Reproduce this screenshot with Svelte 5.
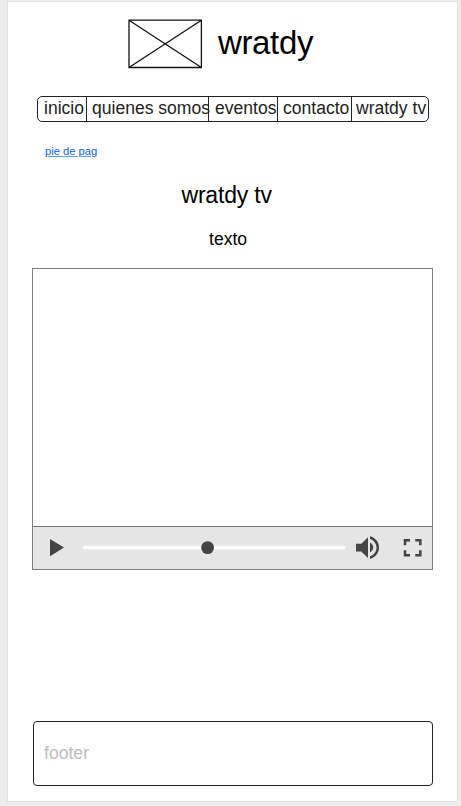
<script>
  const items = [
    { label: 'inicio', width: 49, pad: 6 },
    { label: 'quienes somos', width: 122, pad: 5 },
    { label: 'eventos', width: 69, pad: 6 },
    { label: 'contacto', width: 74, pad: 5 },
    { label: 'wratdy tv', width: 76, pad: 4 }
  ];
</script>

<div class="canvas">
  <main class="page">
    <header>
      <svg class="logo" width="75" height="50" viewBox="0 0 75 50" fill="none" stroke="#111" stroke-width="1.3">
        <path d="M1 1.2H73.4V48.5H1ZM1 1.2L73.4 48.5M73.4 1.2L1 48.5" />
      </svg>
      <h1>wratdy</h1>
    </header>

    <nav>
      {#each items as item}
        <span class="item" style="width: {item.width}px; padding-left: {item.pad}px">{item.label}</span>
      {/each}
    </nav>

    <a class="crumb" href="#footer">pie de pag</a>
    <h2>wratdy tv</h2>
    <p>texto</p>

    <section class="player">
      <div class="screen"></div>
      <div class="controls">
        <svg width="399" height="42" viewBox="0 0 399 42">
          <path d="M17 12L31 20.6L17 29.2Z" fill="#444" />
          <path d="M51.5 20.6H310.5" stroke="#fff" stroke-width="3.6" stroke-linecap="round" />
          <circle cx="174.6" cy="20.6" r="6.4" fill="#444" />
          <g fill="#444">
            <path d="M323 16.8H328.3L335 10.2V31L328.3 24.4H323Z" />
            <path d="M337 15.6Q340.2 17.4 340.2 20.6Q340.2 23.8 337 25.6Z" />
            <path d="M337 9.3C342.2 10.5 346 15 346 20.6S342.2 30.7 337 31.9V29.3C340.8 28.2 343.5 24.7 343.5 20.6S340.8 13 337 11.9Z" />
          </g>
          <path d="M372 18.2V13.2H377M382.3 13.2H387.3V18.2M387.3 23.2V28.2H382.3M377 28.2H372V23.2" fill="none" stroke="#444" stroke-width="2.5" />
        </svg>
      </div>
    </section>

    <footer id="footer">footer</footer>
  </main>
</div>

<style>
  :global(body) {
    margin: 0;
    background: #ededed;
  }
  .canvas {
    box-sizing: border-box;
    height: 806px;
    padding: 1px 3px 4px 7px;
    background: #ededed;
    font-family: "Liberation Sans", Arial, sans-serif;
    color: #000;
  }
  .page {
    box-sizing: border-box;
    display: flex;
    flex-direction: column;
    height: 801px;
    border: 1px solid #e0e0e0;
    background: #fff;
  }
  header {
    display: flex;
    height: 50px;
    margin: 17px 0 0 120px;
  }
  .logo {
    flex: none;
  }
  h1 {
    margin: 5px 0 0 15px;
    font-size: 33px;
    font-weight: 400;
    line-height: 38px;
    letter-spacing: -0.35px;
  }
  nav {
    box-sizing: border-box;
    display: flex;
    width: 392px;
    height: 26px;
    margin: 27px 0 0 29px;
    border: 1.2px solid #222;
    border-radius: 5px;
    color: #222;
    font-size: 17.55px;
    line-height: 23px;
  }
  .item {
    box-sizing: border-box;
    flex: none;
    border-right: 1px solid #222;
    white-space: nowrap;
  }
  .item:last-child {
    border-right: 0;
  }
  .crumb {
    align-self: flex-start;
    margin: 22px 0 0 37px;
    color: #0b62e6;
    font-size: 11.2px;
    line-height: 14px;
    text-decoration-color: #5b9ff5;
    text-decoration-thickness: 1px;
    text-underline-offset: 1px;
  }
  h2 {
    margin: 24px 0 0 173.5px;
    font-size: 23px;
    font-weight: 400;
    line-height: 27px;
    letter-spacing: -0.2px;
  }
  p {
    margin: 20px 0 0 201px;
    font-size: 17.6px;
    line-height: 20px;
  }
  .player {
    box-sizing: border-box;
    width: 401px;
    height: 302px;
    margin: 19px 0 0 24px;
    border: 1px solid #808080;
  }
  .screen {
    height: 257px;
  }
  .controls {
    height: 42px;
    border-top: 1px solid #777;
    background: #e5e5e5;
  }
  .controls svg {
    display: block;
  }
  footer {
    box-sizing: border-box;
    width: 400px;
    height: 65px;
    margin: 151px 0 0 25px;
    padding-left: 10px;
    border: 1px solid #222;
    border-radius: 4px;
    color: #bdbdbd;
    font-size: 17.6px;
    line-height: 62px;
  }
</style>
